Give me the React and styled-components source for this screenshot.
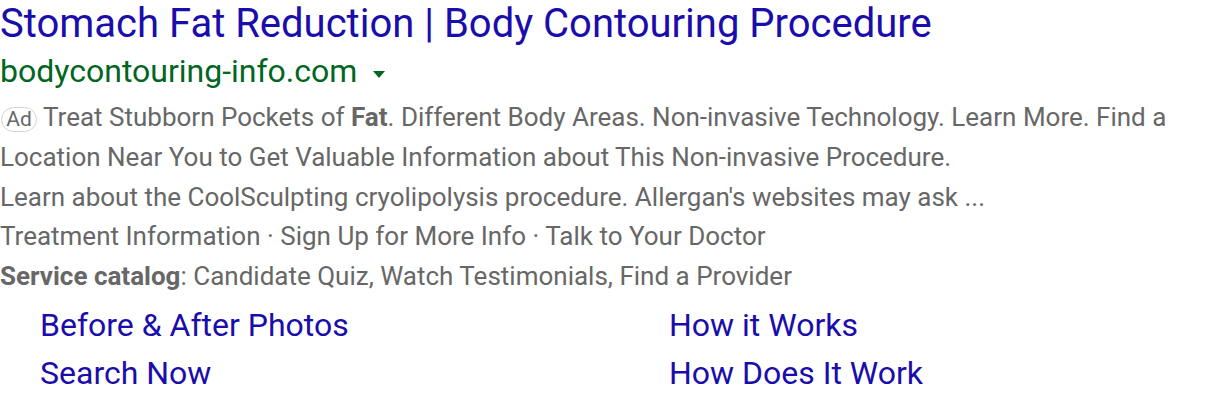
import React from 'react';
import styled, { createGlobalStyle } from 'styled-components';

const GlobalStyle = createGlobalStyle`
  html, body {
    margin: 0;
    padding: 0;
    background: #fff;
  }
  body {
    font-family: Roboto, "Liberation Sans", Arial, sans-serif;
  }
`;

const Result = styled.div`
  width: 1216px;
  height: 402px;
  overflow: hidden;
`;

const Title = styled.a`
  display: block;
  color: #1a0dab;
  font-size: 40px;
  line-height: 48px;
  text-decoration: none;
  white-space: nowrap;
`;

const UrlRow = styled.div`
  display: flex;
  align-items: center;
  gap: 16px;
  height: 46px;
`;

const Url = styled.cite`
  color: #006621;
  font-style: normal;
  font-size: 32px;
  line-height: 46px;
`;

const Arrow = styled.span`
  width: 0;
  height: 0;
  border-left: 6.5px solid transparent;
  border-right: 6.5px solid transparent;
  border-top: 7px solid #006621;
  margin-top: 6px;
`;

const Desc = styled.div`
  color: #676767;
  font-size: 26px;
  line-height: 39.75px;
  padding-top: 4px;
`;

const Line = styled.div`
  white-space: nowrap;
`;

const AdBadge = styled.span`
  display: inline-flex;
  align-items: center;
  justify-content: center;
  box-sizing: border-box;
  height: 25px;
  width: 36px;
  margin: 0 6px 0 1px;
  padding-top: 1px;
  border: 1.5px solid #d4d4d4;
  border-radius: 13px;
  font-size: 21px;
  color: #676767;
  vertical-align: middle;
  line-height: 1;
`;

const Sitelinks = styled.div`
  display: grid;
  grid-template-columns: 629px 1fr;
  padding-left: 40px;
  padding-top: 4px;
`;

const Sitelink = styled.a`
  color: #1a0dab;
  font-size: 32px;
  line-height: 48px;
  text-decoration: none;
  white-space: nowrap;
`;

export default function App() {
  return (
    <>
      <GlobalStyle />
      <Result>
        <Title href="#">Stomach Fat Reduction | Body Contouring Procedure</Title>
        <UrlRow>
          <Url>bodycontouring-info.com</Url>
          <Arrow />
        </UrlRow>
        <Desc>
          <Line>
            <AdBadge>Ad</AdBadge>Treat Stubborn Pockets of <b>Fat</b>. Different Body Areas. Non-invasive Technology. Learn More. Find a
          </Line>
          <Line>Location Near You to Get Valuable Information about This Non-invasive Procedure.</Line>
          <Line>Learn about the CoolSculpting cryolipolysis procedure. Allergan's websites may ask ...</Line>
          <Line>Treatment Information · Sign Up for More Info · Talk to Your Doctor</Line>
          <Line>
            <b>Service catalog</b>: Candidate Quiz, Watch Testimonials, Find a Provider
          </Line>
        </Desc>
        <Sitelinks>
          <Sitelink href="#">Before &amp; After Photos</Sitelink>
          <Sitelink href="#">How it Works</Sitelink>
          <Sitelink href="#">Search Now</Sitelink>
          <Sitelink href="#">How Does It Work</Sitelink>
        </Sitelinks>
      </Result>
    </>
  );
}
